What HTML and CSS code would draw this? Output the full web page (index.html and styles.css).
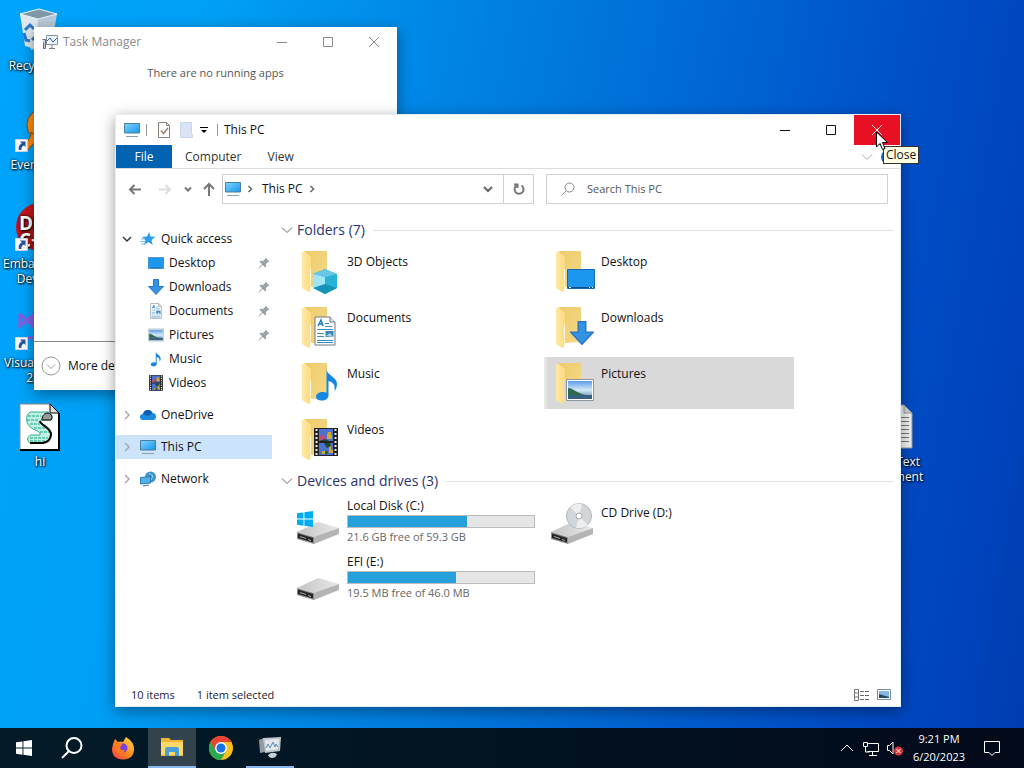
FILE: index.html
```
<!DOCTYPE html>
<html lang="en">

	<head>
		<meta charset="UTF-8">
		<title>This PC</title>
		<link rel="stylesheet" href="styles.css">
	</head>

	<body>
		<!-- shared icons -->
		<svg class="defs" width="0" height="0" aria-hidden="true">
			<defs>
				<linearGradient id="gScreen" x1="0" y1="0" x2="1" y2="1">
					<stop offset="0" stop-color="#7fd4ff" />
					<stop offset="1" stop-color="#1796ec" />
				</linearGradient>
				<linearGradient id="gFlap" x1="0" y1="0" x2="1" y2="0">
					<stop offset="0" stop-color="#ffe9a6" />
					<stop offset="1" stop-color="#fddb7f" />
				</linearGradient>
				<linearGradient id="gFolder" x1="0" y1="0" x2="1" y2="1">
					<stop offset="0" stop-color="#eecb6a" />
					<stop offset="1" stop-color="#f6d987" />
				</linearGradient>
				<linearGradient id="gDrive" x1="0" y1="0" x2="1" y2="0">
					<stop offset="0" stop-color="#c4c4c4" />
					<stop offset="1" stop-color="#e9e9e9" />
				</linearGradient>
				<linearGradient id="gSky" x1="0" y1="0" x2="0" y2="1">
					<stop offset="0" stop-color="#5a9be6" />
					<stop offset="0.5" stop-color="#d4e8f8" />
					<stop offset="1" stop-color="#4a7fa8" />
				</linearGradient>
				<linearGradient id="gFire" x1="0" y1="1" x2="1" y2="0">
					<stop offset="0" stop-color="#ff3350" />
					<stop offset="0.5" stop-color="#ff8a1e" />
					<stop offset="1" stop-color="#ffe04a" />
				</linearGradient>
			</defs>
			<symbol id="pc" viewBox="0 0 16 16">
				<path d="M.5 1.500h15v9.500h-15z" fill="url(#gScreen)" stroke="#4a7f9c" />
				<path d="M2 14.500h12" stroke="#8aa0b0" />
			</symbol>
			<symbol id="chev" viewBox="0 0 12 12">
				<path d="M1 3.500l5 5 5-5" fill="none" stroke="currentColor" />
			</symbol>
			<symbol id="chevSmall" viewBox="0 0 12 12">
				<path d="M4.500 3l3 3-3 3" fill="none" stroke="currentColor" stroke-width="1.500" />
			</symbol>
			<symbol id="chevTree" viewBox="0 0 12 12">
				<path d="M4 2l4 4-4 4" fill="none" stroke="currentColor" stroke-width="1.500" />
			</symbol>
			<symbol id="folder" viewBox="0 0 48 48">
				<path d="M10 4h22q1 0 1 1v33q0 1-1 1l-15 1V12z" fill="url(#gFolder)" />
				<path d="M8 6q0-2 2-1l6 4q1 1 1 3v8l-1 5 .5 14q0 6-2 6L8 41z" fill="url(#gFlap)" />
			</symbol>
			<symbol id="drive" viewBox="0 0 48 48">
				<path d="M3 34L24 24l21 6-24 9z" fill="url(#gDrive)" />
				<path d="M20 39l25-9v6L20 46z" fill="#b4b4b4" />
				<path d="M3 34l17 5v7L3 41z" fill="#8c8c8c" />
				<path d="M4 35.500l15 4.500v4.500L4 40z" fill="#262626" />
				<path d="M6 38.500l6 2M14 41.500l3 1" stroke="#9ab0a4" />
			</symbol>
			<symbol id="arrowDown" viewBox="0 0 16 16">
				<path d="M5.500.500h5v7h5L8 15.500.500 7.500h5z" fill="#3593e4" stroke="#2a78c4" />
			</symbol>
			<symbol id="note" viewBox="0 0 24 34">
				<path d="M11.500 1c0 6 10.500 8 10.500 15 0 3-1 5-2.500 7 1-7-2-9-6-10v14.500c0 3-3 5-6.500 5S1 31 1 28.500c0-3 3.500-4.500 6.500-4.500 1.500 0 3 .3 4 .8z" fill="#1587e2" />
			</symbol>
			<symbol id="doc" viewBox="0 0 22 30">
				<path d="M1 1h15l5 5v23H1z" fill="#fff" stroke="#6f7a84" />
				<path d="M16 1v5h5" fill="#e4e8ec" stroke="#6f7a84" />
				<path d="M4 10l3-6 2 6M5 8h3" fill="none" stroke="#1f7fc4" stroke-width="1.500" />
				<path d="M11 7.500h4M11 10.500h7M3 13.500h16M3 17.500h7M3 20.500h7M3 24.500h16M3 26.500h16" stroke="#3a8fc8" />
				<path d="M11.500 15h8v6h-8z" fill="#3a86b8" />
				<path d="M12 20l4-3 3 4z" fill="#a8d8e8" />
			</symbol>
			<symbol id="film" viewBox="0 0 24 28">
				<path d="M0 0h24v28H0z" fill="#222" />
				<path d="M5 1h14v12H5zM5 15h14v12H5z" fill="#4a72d0" />
				<path d="M5 9l4-3 3 4v3H5z" fill="#c04a7a" />
				<path d="M14 4h3v3h1v4h-5V7zM15 18h2v4h2v3h-4zM8 23h3v3H8z" fill="#d8a820" />
				<path d="M5 13l6-2 4 2zM10 15h6l1 3-4 2zM12 22l2 3-3 2z" fill="#1c4a30" />
				<path d="M2.500 1v27M21.500 1v27" stroke="#e8e8e8" stroke-width="2" stroke-dasharray="2 2" />
			</symbol>
			<symbol id="photo" viewBox="0 0 28 22">
				<path d="M.5.500h27v21H.500z" fill="#fff" stroke="#8a949c" />
				<path d="M2 2h24v18H2z" fill="url(#gSky)" />
				<path d="M2 9c5 0 8 5 18 7H2z" fill="#2f6a4a" />
				<path d="M2 16h24v4H2z" fill="#35607f" />
			</symbol>
			<symbol id="desk" viewBox="0 0 28 20">
				<path d="M.5.500h27v19H.500z" fill="#1c97f0" stroke="#1769ad" />
				<path d="M1 18.500h26" stroke="#0c4f91" />
				<path d="M2 18.500h2M22 18.500h1M25 18.500h1" stroke="#fff" />
			</symbol>
			<symbol id="pin" viewBox="0 0 12 12">
				<path d="M7.500.500l4 4-1.500.500-2 2 .2 2.500-1 1L4.700 8 1 11.500l-.5-.5L4 7.300 1.500 4.800l1-1L5 4l2-2z" fill="#9ba3aa" />
			</symbol>
			<symbol id="taskmgr" viewBox="0 0 16 16">
				<path d="M4.500 1.500h11v9h-11z" fill="#eef5fa" stroke="#8695a0" />
				<path d="M5 7l3-3 3 4 4-4" fill="none" stroke="#2d62a8" />
				<path d="M.5 5.500h3v9h-2v-6" fill="#ccd" stroke="#667" />
				<path d="M10 11v3M7 14.500h6" stroke="#778" />
			</symbol>
			<symbol id="shortcut" viewBox="0 0 13 13">
				<path d="M.5.500h12v12H.500z" fill="#fff" stroke="#cfd8e2" />
				<path d="M5 2.500h5.500V8L9 6.500C7 7.500 6 9 6.500 11H4C3 8 4.500 5.500 6.800 4.300z" fill="#28569c" />
			</symbol>
			<symbol id="win" viewBox="0 0 16 16">
				<path d="M0 2.300l6.500-.9v6.200H0zM7.400 1.300L16 0v7.600H7.400zM0 8.500h6.500v6.200L0 13.800zM7.400 8.500H16V16l-8.600-1.200z" fill="currentColor" />
			</symbol>
		</svg>

		<main class="desktop">
			<ul class="shortcuts">
				<li class="shortcut">
					<svg viewBox="0 0 48 48">
						<path d="M4 7l19-5 18 5-6 33-20 3z" fill="#b9cbd8" />
						<path d="M4 7l19-5 18 5-19 5z" fill="#7f98a8" stroke="#e8f2f8" />
						<path d="M4 7l18 5-2 30-11-3z" fill="#dfe8ee" />
						<path d="M9 23l5-5 4 4M8 26l2 7 4 1M16 33l4-4-1-4" fill="none" stroke="#2b78cf" stroke-width="3" />
					</svg>
					<span>Recycle Bin</span>
				</li>
				<li class="shortcut">
					<svg viewBox="0 0 48 48">
						<circle cx="27" cy="19" r="16" fill="#ff8a0f" stroke="#8a4a10" />
						<path d="M15 26q1 6-9 15l5 4q8-11 14-10z" fill="#ff8a0f" stroke="#8a4a10" />
						<circle cx="30" cy="19" r="8" fill="#fff" />
						<use href="#shortcut" x="-1" y="33" width="13" height="13" />
					</svg>
					<span>Everything</span>
				</li>
				<li class="shortcut">
					<svg viewBox="0 0 48 48">
						<circle cx="24" cy="22" r="24" fill="#c4161c" />
						<text class="dev-mark" x="3" y="25">DEV</text>
						<text class="dev-mark" x="3" y="42">C++</text>
						<use href="#shortcut" x="-1" y="33" width="13" height="13" />
					</svg>
					<span>Embarcadero Dev-C++</span>
				</li>
				<li class="shortcut">
					<svg viewBox="0 0 48 48">
						<path d="M4 10v12l12-10v9L4 10M16 16L40 0v34L16 18" fill="none" stroke="#8a5be0" stroke-width="3" />
						<path d="M12 34h12" stroke="#8a5be0" stroke-width="3" />
						<use href="#shortcut" x="-1" y="33" width="13" height="13" />
					</svg>
					<span>Visual Studio 2022</span>
				</li>
				<li class="shortcut">
					<svg viewBox="0 0 48 48">
						<path d="M4 1h30l9 9v37H4z" fill="#fff" stroke="#888" />
						<path d="M4 47h39V10" fill="none" stroke="#000" stroke-width="2" />
						<path d="M34 1v9h9z" fill="#ddd" stroke="#000" />
						<path d="M14 9h18c4 1 5 5 3 8h-9c-4 1-2 4 2 6 6 3 8 6 6 11-2 6-7 6-19 6-5-1-4-7 0-8h9c1-3-3-4-7-6-8-4-8-14-3-17z" fill="#bff2e2" stroke="#3aa890" />
						<path d="M26 17c0-5 3-7 6-7 4 1 5 5 3 7z" fill="#999" stroke="#000" />
						<path d="M12 13h13M11 17h12M14 21h10M18 25h12M24 29h10M14 35h18M14 38h16" stroke="#14a88c" stroke-dasharray="3 1" />
						<path d="M24 18c0 4 12 7 11 14-1 6-4 7-8 8H14" fill="none" stroke="#000" stroke-width="2" />
					</svg>
					<span>hi</span>
				</li>
			</ul>

			<div class="shortcut text-file">
				<svg viewBox="0 0 48 48">
					<path d="M7 2h27l8 8v35H7z" fill="#f2f2f2" stroke="#999" />
					<path d="M34 2v8h8z" fill="#cfd4d8" stroke="#999" />
					<path d="M10 14.500h29M10 18.500h29M10 22.500h29M10 26.500h29M10 30.500h29M10 34.500h29M10 38.500h29" stroke="#777" />
				</svg>
				<span>New Text Document</span>
			</div>

			<section class="window task-manager" aria-label="Task Manager">
				<header class="titlebar">
					<svg class="i16"><use href="#taskmgr" /></svg>
					<h2>Task Manager</h2>
					<div class="controls">
						<button type="button" aria-label="Minimize"><svg viewBox="0 0 12 12"><path d="M1 6.500h10" /></svg></button>
						<button type="button" aria-label="Maximize"><svg viewBox="0 0 12 12"><path d="M1.500 1.500h9v9h-9z" /></svg></button>
						<button type="button" aria-label="Close"><svg viewBox="0 0 12 12"><path d="M1 1l10 10M11 1L1 11" /></svg></button>
					</div>
				</header>
				<p class="empty">There are no running apps</p>
				<footer>
					<button type="button" class="more">
						<svg viewBox="0 0 20 20"><circle cx="10" cy="10" r="9" /><path d="M6 8.500l4 4 4-4" /></svg>
						More details
					</button>
				</footer>
			</section>

			<section class="window explorer" aria-label="This PC">
				<header class="titlebar">
					<svg class="i16"><use href="#pc" /></svg>
					<span class="sep"></span>
					<button type="button" class="quick" aria-label="Properties">
						<svg viewBox="0 0 16 16"><path d="M2.500.500h8l3 3v12h-11z" fill="#fff" stroke="#8a8078" /><path d="M10.500.500v3h3" fill="none" stroke="#8a8078" /><path d="M5 8.500l2.500 3L12 6" fill="none" stroke="#a08070" stroke-width="1.500" /></svg>
					</button>
					<button type="button" class="quick" aria-label="New folder">
						<svg viewBox="0 0 16 16"><path d="M2.500.500h11v11l1 1v3h-12z" fill="#dbe4f6" stroke="#ccd6ea" /></svg>
					</button>
					<button type="button" class="quick small" aria-label="Customize">
						<svg viewBox="0 0 8 8"><path d="M0 1.500h8" stroke="#000" /><path d="M1 4h6L4 7z" /></svg>
					</button>
					<span class="sep"></span>
					<h2>This PC</h2>
					<div class="controls">
						<button type="button" aria-label="Minimize"><svg viewBox="0 0 12 12"><path d="M1 6.500h10" /></svg></button>
						<button type="button" aria-label="Maximize"><svg viewBox="0 0 12 12"><path d="M1.500 1.500h9v9h-9z" /></svg></button>
						<button type="button" class="hot" aria-label="Close"><svg viewBox="0 0 12 12"><path d="M1 1l10 10M11 1L1 11" /></svg></button>
					</div>
				</header>

				<nav class="ribbon">
					<button type="button" class="file">File</button>
					<button type="button">Computer</button>
					<button type="button">View</button>
					<svg class="i12 expand"><use href="#chev" /></svg>
					<span class="help"></span>
				</nav>

				<div class="toolbar">
					<button type="button" class="nav" aria-label="Back"><svg viewBox="0 0 16 16"><path d="M14 8.500H3M7.500 4L3 8.500 7.500 13" /></svg></button>
					<button type="button" class="nav off" aria-label="Forward"><svg viewBox="0 0 16 16"><path d="M2 8.500h11M8.500 4L13 8.500 8.500 13" /></svg></button>
					<button type="button" class="nav recent" aria-label="Recent locations"><svg viewBox="0 0 12 12"><path d="M3 4.500l3 3 3-3" /></svg></button>
					<button type="button" class="nav up" aria-label="Up"><svg viewBox="0 0 16 16"><path d="M8 15V3M3 8l5-5 5 5" /></svg></button>
					<div class="address">
						<svg class="i16"><use href="#pc" /></svg>
						<svg class="i12 crumb"><use href="#chevSmall" /></svg>
						<span>This PC</span>
						<svg class="i12 crumb"><use href="#chevSmall" /></svg>
						<button type="button" class="drop" aria-label="Previous locations"><svg viewBox="0 0 12 12"><path d="M2 4l4 4 4-4" /></svg></button>
						<button type="button" class="refresh" aria-label="Refresh"><svg viewBox="0 0 16 16"><path d="M10.500 4.500A4.500 4.500 0 1 1 6 4.300M3 3.500h3.500V7" /></svg></button>
					</div>
					<label class="search">
						<svg viewBox="0 0 14 14"><circle cx="8.500" cy="5.500" r="4.500" /><path d="M5 9l-4.500 4.500" /></svg>
						<input type="search" placeholder="Search This PC" aria-label="Search This PC">
					</label>
				</div>

				<div class="panes">
					<nav class="tree">
						<a href="#" class="root open">
							<svg class="i12" viewBox="0 0 12 12"><path d="M2 4l4 4 4-4" fill="none" stroke="currentColor" stroke-width="1.500" /></svg>
							<svg class="i16" viewBox="0 0 16 16"><path d="M9 1l1.500 4.500 5 .3-4 3.200 1.200 5L8.500 11l-4.500 3 1.500-5L2 6l5-.5z" fill="#2f9be8" /><path d="M1 8h4M0 10.500h5M1 13h3" stroke="#7cc0f0" /></svg>
							<span>Quick access</span>
						</a>
						<a href="#" class="leaf"><svg class="i16"><use href="#desk" /></svg><span>Desktop</span><svg class="i12 pin"><use href="#pin" /></svg></a>
						<a href="#" class="leaf"><svg class="i16"><use href="#arrowDown" /></svg><span>Downloads</span><svg class="i12 pin"><use href="#pin" /></svg></a>
						<a href="#" class="leaf"><svg class="i16"><use href="#doc" /></svg><span>Documents</span><svg class="i12 pin"><use href="#pin" /></svg></a>
						<a href="#" class="leaf"><svg class="i16"><use href="#photo" /></svg><span>Pictures</span><svg class="i12 pin"><use href="#pin" /></svg></a>
						<a href="#" class="leaf"><svg class="i16"><use href="#note" /></svg><span>Music</span></a>
						<a href="#" class="leaf"><svg class="i16"><use href="#film" /></svg><span>Videos</span></a>
						<a href="#" class="root">
							<svg class="i12"><use href="#chevTree" /></svg>
							<svg class="i16" viewBox="0 0 16 16"><path d="M3 13q-3 0-3-3t3-3q1-4 5-4 3 0 4.500 3Q16 6 16 9.500 16 13 13 13z" fill="#1c8be0" /><path d="M3 7q1-4 5-4 3 0 4.500 3L8 9z" fill="#0a5fb4" /></svg>
							<span>OneDrive</span>
						</a>
						<a href="#" class="root current">
							<svg class="i12"><use href="#chevTree" /></svg>
							<svg class="i16"><use href="#pc" /></svg>
							<span>This PC</span>
						</a>
						<a href="#" class="root">
							<svg class="i12"><use href="#chevTree" /></svg>
							<svg class="i16" viewBox="0 0 16 16"><circle cx="10.500" cy="6" r="5.500" fill="#3f93cc" /><path d="M9 2l4 3-2 4" stroke="#a8d4f0" fill="none" /><path d="M.5 6.500l10-1v6.500l-10 1z" fill="#4fb0ea" stroke="#2a78b0" /><path d="M3 15l6-1" stroke="#4a7f9c" /></svg>
							<span>Network</span>
						</a>
					</nav>

					<div class="content">
						<h3><svg class="i12"><use href="#chev" /></svg>Folders (7)</h3>
						<div class="tiles">
							<a href="#" class="tile">
								<svg viewBox="0 0 48 48"><use href="#folder" /><path d="M31 22l12 5v14l-12 6-12-6V27z" fill="#27b4d8" /><path d="M19 27l12-5 12 5-12 3z" fill="#66c8e4" /><path d="M19 27l12 3v17l-12-6z" fill="#a0e6f2" /><path d="M19 41l12-4 12 4-12 6z" fill="#1593b8" /></svg>
								<span>3D Objects</span>
							</a>
							<a href="#" class="tile">
								<svg viewBox="0 0 48 48"><use href="#folder" /><use href="#desk" x="19" y="22" width="28" height="20" /></svg>
								<span>Desktop</span>
							</a>
							<a href="#" class="tile">
								<svg viewBox="0 0 48 48"><use href="#folder" /><use href="#doc" x="20" y="13" width="22" height="30" /></svg>
								<span>Documents</span>
							</a>
							<a href="#" class="tile">
								<svg viewBox="0 0 48 48"><use href="#folder" /><use href="#arrowDown" x="22" y="18" width="24" height="24" /></svg>
								<span>Downloads</span>
							</a>
							<a href="#" class="tile">
								<svg viewBox="0 0 48 48"><use href="#folder" /><use href="#note" x="21" y="9" width="24" height="34" /></svg>
								<span>Music</span>
							</a>
							<a href="#" class="tile selected">
								<svg viewBox="0 0 48 48"><use href="#folder" /><use href="#photo" x="18" y="20" width="28" height="22" /></svg>
								<span>Pictures</span>
							</a>
							<a href="#" class="tile">
								<svg viewBox="0 0 48 48"><use href="#folder" /><use href="#film" x="20" y="13" width="24" height="28" /></svg>
								<span>Videos</span>
							</a>
						</div>

						<h3><svg class="i12"><use href="#chev" /></svg>Devices and drives (3)</h3>
						<div class="tiles">
							<a href="#" class="tile drive">
								<svg viewBox="0 0 48 48"><use href="#drive" /><use href="#win" class="logo" x="3" y="13" width="16" height="16" /></svg>
								<span>Local Disk (C:)
									<span class="bar"><i style="width: 64%"></i></span>
									<small>21.6 GB free of 59.3 GB</small>
								</span>
							</a>
							<a href="#" class="tile">
								<svg viewBox="0 0 48 48"><use href="#drive" /><circle cx="31" cy="18" r="12.500" fill="#d3d6d8" stroke="#b4b8ba" /><path d="M31 18L22 9q6-5 12-3zM31 18l9 9q-5 4-12 3z" fill="#eceeef" /><circle cx="31" cy="18" r="3" fill="#fff" stroke="#aaa" /></svg>
								<span>CD Drive (D:)</span>
							</a>
							<a href="#" class="tile drive">
								<svg viewBox="0 0 48 48"><use href="#drive" /></svg>
								<span>EFI (E:)
									<span class="bar"><i style="width: 58%"></i></span>
									<small>19.5 MB free of 46.0 MB</small>
								</span>
							</a>
						</div>
					</div>
				</div>

				<footer class="status">
					<span>10 items</span>
					<span>1 item selected</span>
					<div class="views">
						<button type="button" aria-label="Details"><svg viewBox="0 0 16 14"><path d="M.5 1.500h4v11h-4zM.5 5h4M.500 9h4" fill="none" stroke="#777" /><path d="M6 3.500h10M6 7.500h10M6 11.500h10" stroke="#666" stroke-dasharray="4 1" /></svg></button>
						<button type="button" aria-label="Large icons"><svg viewBox="0 0 16 14"><path d="M1.500 1.500h13v10h-13z" fill="#fff" stroke="#6f8fa8" /><path d="M3 3h10v7H3z" fill="#8ab8e4" /><path d="M3 6l10 3v1H3z" fill="#234a60" /></svg></button>
					</div>
				</footer>
			</section>

			<div class="tooltip" role="tooltip">Close</div>
			<svg class="cursor" viewBox="0 0 12 20"><path d="M.500 1v15l3.500-3.500L6.500 18.500 9 17.500 6.500 11.500h5z" fill="#fff" stroke="#000" /></svg>
		</main>

		<footer class="taskbar">
			<button type="button" aria-label="Start"><svg class="i16"><use href="#win" /></svg></button>
			<button type="button" aria-label="Search"><svg class="i24" viewBox="0 0 24 24"><circle cx="14" cy="9.500" r="7.500" fill="none" stroke="#fff" stroke-width="2" /><path d="M9 15l-7 7" stroke="#fff" stroke-width="2" /></svg></button>
			<div class="apps">
				<button type="button" aria-label="Firefox">
					<svg class="i24" viewBox="0 0 24 24"><path d="M2 8l2-5 3 3q3-1 5 0l3-5q8 5 8 12 0 10-11 10.500Q1 23 1 13z" fill="url(#gFire)" /><circle cx="12" cy="12" r="4.500" fill="#7a3fe0" /><path d="M4 8q5-1 8 1-3 1-3 3 1 3 5 2-2 5-7 3-4-3-3-9z" fill="#ff7a1c" /></svg>
				</button>
				<button type="button" class="active" aria-label="File Explorer">
					<svg class="i24" viewBox="0 0 24 24"><path d="M1 3h8l2 2h12v16H1z" fill="#f2b535" /><path d="M1 7h22v13H1z" fill="#ffd869" /><path d="M5 14q0-2 2-2h10q2 0 2 2v7h-4v-4H9v4H5z" fill="#4a9fd8" /></svg>
				</button>
				<button type="button" aria-label="Chrome">
					<svg class="i24" viewBox="0 0 24 24"><circle cx="12" cy="12" r="12" fill="#fbc116" /><path d="M12 12L1.600 6A12 12 0 0 0 12 24l5.200-9z" fill="#2da94f" /><path d="M1.600 6A12 12 0 0 1 22.400 6H12l-5.200 9z" fill="#ea4335" /><circle cx="12" cy="12" r="6" fill="#fff" /><circle cx="12" cy="12" r="4.500" fill="#1a73e8" /></svg>
				</button>
				<button type="button" class="running" aria-label="Task Manager">
					<svg class="i24" viewBox="0 0 24 24"><path d="M1 5l5-2 1 14-5 1z" fill="#8f9aa2" /><path d="M5 3l18-1-1 14-15 2z" fill="#c0c8cd" /><path d="M7 5l14-1-1 10-12 2z" fill="#e2e8ec" /><path d="M8 13l2-4 2 4 3-6 2 5 1-3 2 3" fill="none" stroke="#5f8fb4" /><path d="M10 20q4-4 9-1-1 4-5 4-3 0-4-3z" fill="#c9d1d6" /></svg>
				</button>
			</div>
			<div class="tray">
				<svg class="i16" viewBox="0 0 16 16"><path d="M2 11l6-6 6 6" /></svg>
				<svg class="i16" viewBox="0 0 16 16"><path d="M4.500 3.500h11v8h-11M9.500 12v3M6 15.500h8M.500 2.500h4v4h-4zM2.500 7v5h4" /></svg>
				<svg class="i16" viewBox="0 0 16 16"><path d="M.5 5.500h2L6 2v12l-3.500-3.500h-2z" /><circle cx="11.500" cy="11" r="4.500" fill="#d8343c" stroke="none" /><path d="M9.500 9l4 4M13.500 9l-4 4" /></svg>
			</div>
			<div class="clock"><time>9:21 PM</time><time>6/20/2023</time></div>
			<button type="button" class="notify" aria-label="Notifications"><svg class="i16" viewBox="0 0 16 16"><path d="M.5 1.500h15v11H11l-3 3-3-3H.500z" fill="none" stroke="#fff" /></svg></button>
		</footer>
	</body>

</html>
```
FILE: styles.css
```
* {
	box-sizing: border-box;
	margin: 0;
	padding: 0;
}

body {
	display: flex;
	flex-direction: column;
	height: 100vh;
	overflow: hidden;
	font-family: "Open Sans", "Noto Sans", sans-serif;
	font-size: 12px;
	line-height: 16px;
	color: #111;
}

ul {
	list-style: none;
}

a {
	color: inherit;
	text-decoration: none;
}

button {
	border: 0;
	background: none;
	font: inherit;
	color: inherit;
}

svg {
	display: block;
	flex: none;
}

.defs {
	position: absolute;
}

.i12 {
	width: 12px;
	height: 12px;
}

.i16 {
	width: 16px;
	height: 16px;
}

.i24 {
	width: 24px;
	height: 24px;
}

/* desktop */
.desktop {
	flex: 1;
	position: relative;
	overflow: hidden;
	background: linear-gradient(100deg, #00a4fb 0%, #00a0f6 18%, #0078dc 50%, #0050c8 80%, #0044bc 92%, #003cb0 100%);
}

.shortcuts {
	width: 74px;
	margin: 7px 0 0 3px;
}

.shortcut {
	width: 74px;
	height: 99px;
	color: #fff;
	line-height: 15px;
	text-align: center;
	text-shadow: 1px 1px 2px #000, 0 0 3px #000;
}

.shortcut svg {
	width: 48px;
	height: 48px;
	margin: 0 auto 3px;
	overflow: visible;
}

.dev-mark {
	font: bold 19px "Open Sans", sans-serif;
	fill: #fff;
}

.text-file {
	position: absolute;
	left: 857px;
	top: 403px;
}

/* windows */
.window {
	position: absolute;
	display: flex;
	flex-direction: column;
	background: #fff;
	box-shadow: 0 4px 14px rgba(0, 0, 0, 0.4);
}

.task-manager {
	left: 34px;
	top: 27px;
	width: 363px;
	height: 363px;
}

.explorer {
	left: 115px;
	top: 114px;
	width: 786px;
	height: 593px;
	border: 1px solid #e4edf4;
}

.titlebar {
	display: flex;
	align-items: center;
	height: 30px;
	padding-left: 8px;
}

.titlebar h2 {
	font-size: 12px;
	font-weight: normal;
}

.controls {
	display: flex;
	align-self: stretch;
	margin-left: auto;
}

.controls button {
	width: 46px;
	display: flex;
	align-items: center;
	justify-content: center;
}

.controls svg {
	width: 12px;
	height: 12px;
	fill: none;
	stroke: currentColor;
}

.controls .hot {
	background: #e81123;
	color: #fff;
}

.task-manager .titlebar {
	color: #8a8a8a;
	gap: 5px;
}

.empty {
	flex: 1;
	padding-top: 8px;
	font-size: 11px;
	color: #555;
	text-align: center;
}

.task-manager footer {
	height: 49px;
	padding: 14px 7px;
	border-top: 1px solid #8a8a8a;
}

.more {
	display: flex;
	align-items: center;
	gap: 7px;
}

.more svg {
	width: 20px;
	height: 20px;
	fill: none;
	stroke: #999;
}

.quick {
	width: 22px;
	padding: 0 3px;
}

.quick svg {
	width: 16px;
	height: 16px;
}

.quick.small {
	width: 14px;
}

.quick.small svg {
	width: 8px;
	height: 8px;
}

.sep {
	width: 1px;
	height: 12px;
	margin: 0 6px;
	background: #999;
}

/* ribbon and address bar */
.ribbon {
	display: flex;
	align-items: center;
	height: 24px;
	border-bottom: 1px solid #dcdcdc;
	color: #333;
}

.ribbon button {
	align-self: stretch;
	padding: 0 13px;
}

.ribbon .file {
	width: 56px;
	background: #0063b1;
	color: #fff;
}

.expand {
	margin-left: auto;
	color: #aaa;
}

.help {
	width: 14px;
	height: 14px;
	margin: 0 5px 0 8px;
	border-radius: 50%;
	background: #1468c0;
}

.toolbar {
	display: flex;
	align-items: center;
	height: 40px;
	padding: 0 12px 0 4px;
}

.nav {
	display: flex;
	align-items: center;
	justify-content: center;
	width: 30px;
	height: 30px;
}

.nav svg,
.refresh svg {
	width: 16px;
	height: 16px;
	fill: none;
	stroke: #777;
	stroke-width: 2;
}

.nav.off svg {
	stroke: #ddd;
}

.nav.recent {
	width: 16px;
}

.nav.recent svg {
	width: 12px;
	height: 12px;
}

.nav.up {
	width: 26px;
}

.address {
	display: flex;
	align-items: center;
	flex: 1;
	height: 30px;
	padding-left: 2px;
	border: 1px solid #d0d0d0;
	color: #111;
}

.crumb {
	margin: 0 3px;
	color: #666;
}

.address span {
	margin-left: 3px;
}

.drop,
.refresh {
	display: flex;
	align-items: center;
	justify-content: center;
	width: 30px;
	height: 28px;
}

.drop {
	margin-left: auto;
}

.drop svg {
	width: 12px;
	height: 12px;
	fill: none;
	stroke: #666;
	stroke-width: 2;
}

.refresh {
	border-left: 1px solid #d0d0d0;
}

.search {
	display: flex;
	align-items: center;
	gap: 12px;
	width: 342px;
	height: 30px;
	margin-left: 12px;
	padding-left: 14px;
	border: 1px solid #d0d0d0;
}

.search svg {
	width: 14px;
	height: 14px;
	fill: none;
	stroke: #888;
}

.search input {
	flex: 1;
	border: 0;
	outline: 0;
	font: inherit;
	font-size: 11px;
}

.search input::placeholder {
	color: #555;
}

/* navigation tree and folder view */
.panes {
	display: flex;
	flex: 1;
}

.tree {
	width: 165px;
	padding-top: 18px;
}

.tree a {
	display: flex;
	align-items: center;
	gap: 5px;
	width: 156px;
	height: 24px;
}

.tree .root {
	margin-top: 8px;
	padding-left: 5px;
}

.tree .root .i12 {
	margin-right: 2px;
	color: #aaa;
}

.tree .open .i12 {
	color: #333;
}

.tree .open {
	margin-top: 0;
}

.tree .leaf {
	padding-left: 32px;
}

.tree .current {
	background: #cce4fb;
}

.pin {
	margin-left: auto;
	margin-right: 2px;
}

.content {
	flex: 1;
	padding: 11px 7px 0 0;
}

.content h3 {
	display: flex;
	align-items: center;
	gap: 4px;
	height: 20px;
	font-size: 14px;
	font-weight: normal;
	color: #2a3470;
}

.content h3 .i12 {
	color: #666;
}

.content h3::after {
	content: "";
	flex: 1;
	height: 1px;
	margin-left: 4px;
	background: #e2e2e2;
}

.tiles {
	display: grid;
	grid-template-columns: 250px 250px;
	gap: 4px;
	padding: 5px 0 6px 9px;
}

.tile {
	display: flex;
	gap: 5px;
	height: 52px;
	padding: 2px 5px 0 4px;
}

.tile > svg {
	width: 48px;
	height: 48px;
}

.tile > span {
	flex: 1;
	padding-top: 7px;
}

.tile.drive > span {
	padding-top: 0;
}

.tile.selected {
	background: linear-gradient(90deg, #eee, #d9d9d9 4px);
}

.logo {
	color: #00adef;
}

.bar {
	display: block;
	height: 13px;
	margin: 1px 0;
	border: 1px solid #bcbcbc;
	background: #e6e6e6;
}

.bar i {
	display: block;
	height: 100%;
	background: #26a0da;
}

.tile small {
	display: block;
	font-size: 11px;
	color: #666;
}

.status {
	display: flex;
	align-items: center;
	gap: 22px;
	height: 22px;
	padding: 0 8px 0 15px;
	font-size: 11px;
	color: #223;
}

.views {
	display: flex;
	gap: 6px;
	margin-left: auto;
}

.views svg {
	width: 16px;
	height: 14px;
}

/* pointer over the close button */
.tooltip {
	position: absolute;
	left: 883px;
	top: 146px;
	padding: 0 2px;
	border: 1px solid #333;
	background: #ffffe1;
}

.cursor {
	position: absolute;
	left: 876px;
	top: 131px;
	width: 12px;
	height: 20px;
}

/* taskbar */
.taskbar {
	display: flex;
	height: 40px;
	background: linear-gradient(90deg, #031b28, #020a1a);
	color: #fff;
}

.taskbar button {
	display: flex;
	align-items: center;
	justify-content: center;
	width: 48px;
}

.apps {
	display: flex;
	gap: 1px;
	margin-left: 3px;
}

.apps .active {
	background: #33444f;
}

.apps .active,
.apps .running {
	border-bottom: 2px solid #86b8ec;
}

.tray {
	display: flex;
	align-items: center;
	gap: 8px;
	margin-left: auto;
}

.tray svg {
	fill: none;
	stroke: #fff;
}

.clock {
	display: flex;
	flex-direction: column;
	justify-content: center;
	width: 72px;
	font-size: 11px;
	line-height: 18px;
	text-align: center;
}

.taskbar .notify {
	width: 34px;
	margin-right: 15px;
}
```
